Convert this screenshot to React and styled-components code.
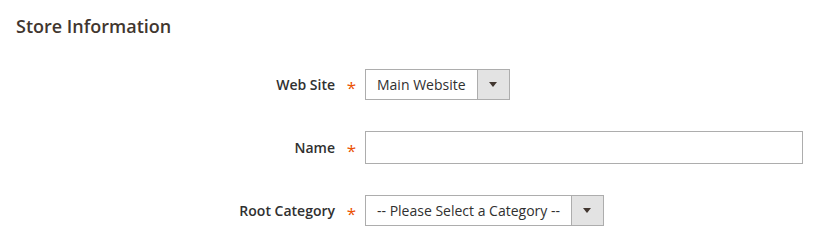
import React from 'react'
import styled, { createGlobalStyle } from 'styled-components'

const GlobalStyle = createGlobalStyle`
	body {
		margin: 0;
		background: #fff;
		font-family: "Open Sans", "Liberation Sans", sans-serif;
	}
`
const Title = styled.h2`
	margin: 0;
	padding: 12px 16px 0;
	font-size: 18px;
	line-height: 28px;
	font-weight: 600;
	color: #41362f;
`
const Form = styled.div`
	display: flex;
	flex-direction: column;
	gap: 30px;
	padding-top: 28px;
`
const Row = styled.div`
	display: grid;
	grid-template-columns: 335px 30px auto;
	align-items: center;
	height: 33px;
`
const Label = styled.label`
	text-align: right;
	font-size: 14px;
	font-weight: 600;
	color: #303030;
`
const Required = styled.span`
	text-align: center;
	font-size: 17px;
	line-height: 1;
	padding-top: 6px;
	padding-left: 3px;
	color: #eb5202;
`
const Select = styled.div`
	display: flex;
	box-sizing: border-box;
	width: ${props => props.width}px;
	height: 31px;
	border: 1px solid #adadad;
	background: #fff;
`
const SelectValue = styled.span`
	flex: 1;
	padding: 0 11px;
	font-size: 14px;
	line-height: 29px;
	color: #303030;
	white-space: nowrap;
`
const SelectArrow = styled.span`
	display: flex;
	align-items: center;
	justify-content: center;
	width: 32px;
	border-left: 1px solid #adadad;
	background: #e3e3e3;
	&::after {
		content: '';
		border-left: 4px solid transparent;
		border-right: 4px solid transparent;
		border-top: 5px solid #41362f;
	}
`
const Input = styled.input`
	box-sizing: border-box;
	width: 438px;
	height: 33px;
	margin: 0;
	border: 1px solid #adadad;
	font-family: inherit;
	font-size: 14px;
	padding: 0 10px;
	outline: none;
`

const Field = ({ label, children }) => (
	<Row>
		<Label>{label}</Label>
		<Required>*</Required>
		<div>{children}</div>
	</Row>
)

export default () => (
	<>
		<GlobalStyle />
		<Title>Store Information</Title>
		<Form>
			<Field label="Web Site">
				<Select width={145}>
					<SelectValue>Main Website</SelectValue>
					<SelectArrow />
				</Select>
			</Field>
			<Field label="Name">
				<Input type="text" />
			</Field>
			<Field label="Root Category">
				<Select width={239}>
					<SelectValue>-- Please Select a Category --</SelectValue>
					<SelectArrow />
				</Select>
			</Field>
		</Form>
	</>
)
